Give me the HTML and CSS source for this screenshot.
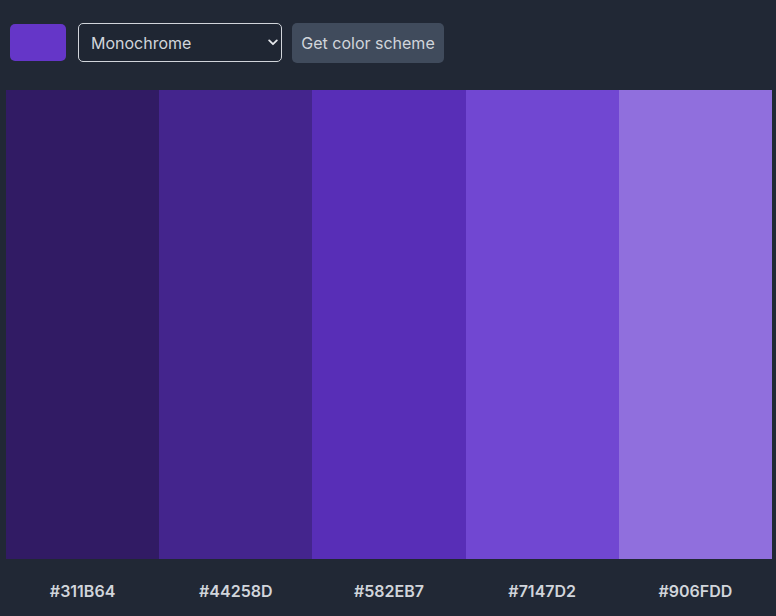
FILE: index.html
```html
<!DOCTYPE html>
<html lang="en">
<head>
<meta charset="utf-8">
<title>Color Scheme</title>
<link rel="stylesheet" href="styles.css">
</head>
<body>
<header class="controls">
  <div class="seed"></div>
  <div class="select-wrap">
    <select class="mode">
      <option>Monochrome</option>
      <option>Monochrome-dark</option>
      <option>Monochrome-light</option>
      <option>Analogic</option>
      <option>Complement</option>
    </select>
    <svg class="chevron" width="10" height="7" viewBox="0 0 10 7"><path d="M1.2 1.4 L5 5.2 L8.8 1.4" fill="none" stroke="#e5e7eb" stroke-width="1.8" stroke-linecap="round" stroke-linejoin="round"/></svg>
  </div>
  <button class="get">Get color scheme</button>
</header>
<main class="palette">
  <div class="col"><div class="swatch" style="background:#311B64"></div><div class="hex">#311B64</div></div>
  <div class="col"><div class="swatch" style="background:#44258D"></div><div class="hex">#44258D</div></div>
  <div class="col"><div class="swatch" style="background:#582EB7"></div><div class="hex">#582EB7</div></div>
  <div class="col"><div class="swatch" style="background:#7147D2"></div><div class="hex">#7147D2</div></div>
  <div class="col"><div class="swatch" style="background:#906FDD"></div><div class="hex">#906FDD</div></div>
</main>
</body>
</html>
```

FILE: styles.css
```css
html, body {
  margin: 0;
  padding: 0;
  background: #212835;
  height: 100%;
  overflow: hidden;
}
body {
  font-family: Inter, "Noto Sans", sans-serif;
  color: #d1d5db;
}
.controls {
  display: flex;
  align-items: flex-start;
  padding: 23px 0 0 10px;
  height: 40px;
}
.seed {
  width: 56px;
  height: 37px;
  border-radius: 5px;
  background: #6536c8;
  margin: 1px 12px 0 0;
}
.select-wrap {
  position: relative;
  margin-right: 10px;
}
.mode {
  appearance: none;
  -webkit-appearance: none;
  width: 204px;
  height: 39px;
  box-sizing: border-box;
  border: 1px solid #d1d5db;
  border-radius: 5px;
  background: #1f2633;
  color: #d1d5db;
  font-family: Inter, "Noto Sans", sans-serif;
  font-size: 16px;
  padding: 0 0 0 12px;
  display: block;
}
.chevron {
  position: absolute;
  right: 4px;
  top: 16px;
  pointer-events: none;
}
.get {
  height: 40px;
  width: 152px;
  padding: 0;
  border: none;
  border-radius: 5px;
  background: #404b5c;
  color: #d1d5db;
  font-family: Inter, "Noto Sans", sans-serif;
  font-size: 16px;
}
.palette {
  display: grid;
  grid-template-columns: repeat(5, 1fr);
  width: 766px;
  margin: 27px 0 0 6px;
}
.col {
  display: flex;
  flex-direction: column;
}
.swatch {
  height: 469px;
}
.hex {
  height: 57px;
  display: flex;
  align-items: center;
  justify-content: center;
  font-size: 16px;
  font-weight: 600;
  color: #d1d5db;
  padding-top: 7px;
  box-sizing: border-box;
}
```
